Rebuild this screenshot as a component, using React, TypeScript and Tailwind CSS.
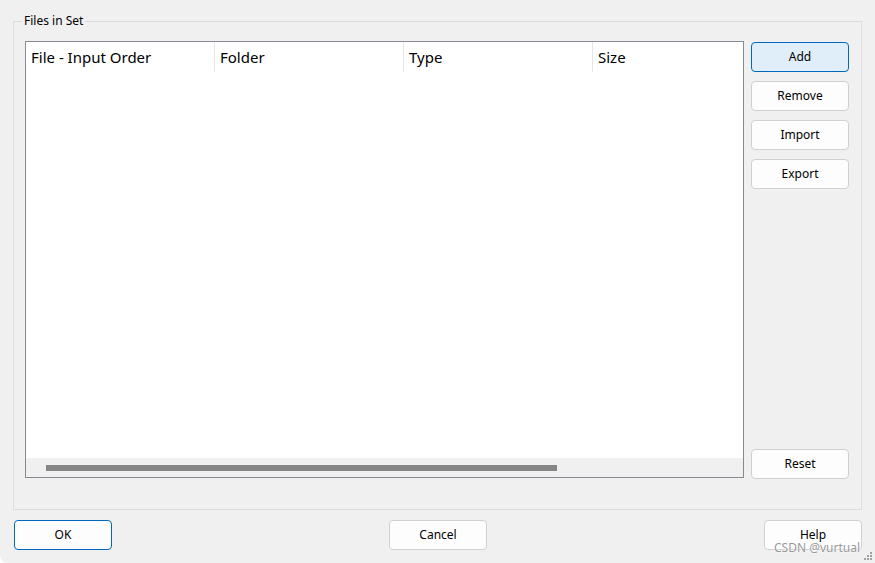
import React from "react";

const font = { fontFamily: '"Segoe UI", "Noto Sans", "Open Sans", sans-serif' };

function Btn({ label, primary, hot }: { label: string; primary?: boolean; hot?: boolean }) {
  return (
    <button
      className={
        "w-[98px] h-[30px] shrink-0 rounded-[4px] text-[12px] text-black flex items-center justify-center border " +
        (primary
          ? "border-[#0067c0] bg-[#e0eef9]"
          : hot
          ? "border-[#0067c0] bg-[#fdfdfd]"
          : "border-[#d0d0d0] bg-[#fdfdfd]")
      }
    >
      {label}
    </button>
  );
}

const cols = ["File - Input Order", "Folder", "Type", "Size"];

export default function App() {
  return (
    <div className="w-[875px] h-[563px] bg-[#f0f0f0] relative overflow-hidden rounded-bl-[8px]" style={font}>
      <div className="pt-[21px] pl-[13px] pr-[13px]">
        {/* group box */}
        <div className="relative h-[489px] border border-[#dcdcdc] flex pl-[11px] pt-[19px] pr-[11px] pb-[30px] gap-[7px]">
          <span className="absolute left-[8px] top-[-9px] bg-[#f0f0f0] px-[2px] text-[12px] leading-[16px] text-black">
            Files in Set
          </span>

          {/* table */}
          <div className="w-[719px] h-[437px] shrink-0 border border-[#868a91] bg-white flex flex-col overflow-hidden">
            <div className="flex h-[30px]">
              {cols.map((c, i) => (
                <div
                  key={c}
                  className={
                    "w-[189px] shrink-0 h-[30px] pl-[5px] flex items-center text-[15px] text-black " +
                    (i < 3 ? "border-r border-[#e5e5e5]" : "")
                  }
                >
                  {c}
                </div>
              ))}
            </div>
            <div className="flex-1" />
            <div className="h-[19px] bg-[#f0f0f0] flex items-center pl-[20px]">
              <div className="w-[511px] h-[6px] bg-[#868686]" />
            </div>
          </div>

          {/* side buttons */}
          <div className="flex flex-col gap-[9px] pt-[1px]">
            <Btn label="Add" primary />
            <Btn label="Remove" />
            <Btn label="Import" />
            <Btn label="Export" />
            <div className="flex-1" />
            <Btn label="Reset" />
          </div>
        </div>

        {/* bottom buttons */}
        <div className="flex justify-between items-center mt-[10px] pl-[1px]">
          <Btn label="OK" hot />
          <Btn label="Cancel" />
          <Btn label="Help" />
        </div>
      </div>

      {/* watermark */}
      <span
        className="absolute left-[774px] top-[540px] text-[12px] leading-[16px] text-[#9a9a9a]"
        style={{ textShadow: "0 0 2px #fff, 0 0 2px #fff" }}
      >
        CSDN @vurtual
      </span>

      {/* resize grip */}
      <svg className="absolute right-[2px] bottom-[2px]" width="10" height="10" viewBox="0 0 10 10">
        <rect x="7" y="1" width="2" height="2" fill="#a0a0a0" />
        <rect x="4" y="4" width="2" height="2" fill="#a0a0a0" />
        <rect x="7" y="4" width="2" height="2" fill="#a0a0a0" />
        <rect x="1" y="7" width="2" height="2" fill="#a0a0a0" />
        <rect x="4" y="7" width="2" height="2" fill="#a0a0a0" />
        <rect x="7" y="7" width="2" height="2" fill="#a0a0a0" />
      </svg>
    </div>
  );
}
